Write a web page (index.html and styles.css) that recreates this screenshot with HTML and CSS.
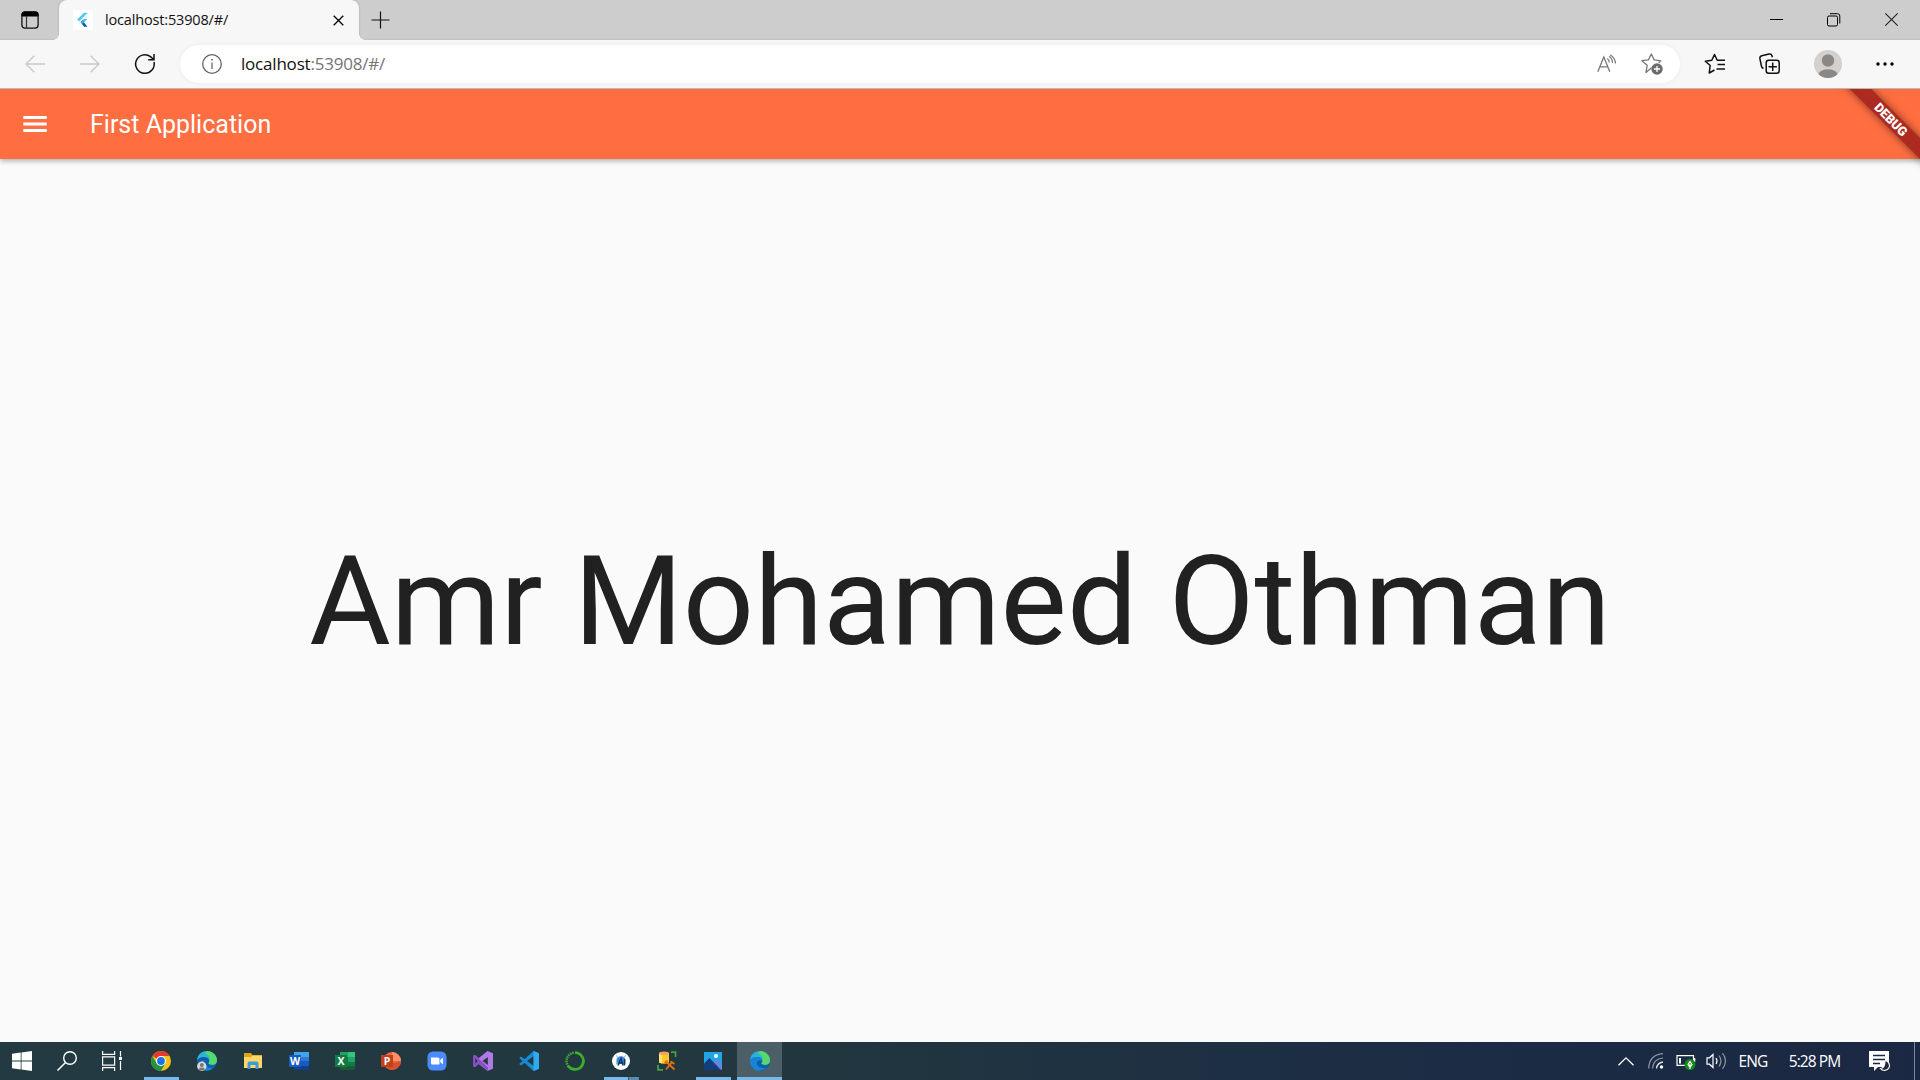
FILE: index.html
```html
<!DOCTYPE html>
<html lang="en">
<head>
<meta charset="utf-8">
<title>First Application</title>
<link rel="stylesheet" href="styles.css">
</head>
<body>
<div class="screen">
  <header class="tabstrip">
    <button class="workspace" aria-label="Tab actions"><svg width="18" height="18" viewBox="0 0 18 18"><rect x=".9" y=".9" width="16.2" height="16.2" rx="3" fill="none" stroke="#111" stroke-width="1.3"/><path d="M1 5V3.500Q1 1 3.500 1h11Q17 1 17 3.500V5z" fill="#000" stroke="#000"/><path d="M5.500 5v12" stroke="#333" stroke-width="1.200"/></svg></button>
    <div class="tab">
      <span class="favicon"><svg width="20" height="20" viewBox="0 0 20 20"><path d="M14.300 3H11L4.500 9.500 6.200 11.200z" fill="#54c5f8" stroke="#54c5f8" stroke-width=".5"/><path d="M14.300 9H11L7.700 12.200l1.700 1.700z" fill="#45b4f0"/><path d="M7.700 12.200l1.700-1.600 5 6.100H11.200z" fill="#01579b"/><path d="M7.700 12.200l1.700-1.700 1.700 1.700-1.700 1.700z" fill="#29b6f6"/></svg></span>
      <span class="tab-title">localhost:53908/#/</span>
      <button class="tab-close" aria-label="Close tab"><svg width="11" height="11" viewBox="0 0 11 11"><path d="M.7.700l9.600 9.600M10.300.700L.700 10.300" stroke="#000" stroke-width="1.300"/></svg></button>
    </div>
    <button class="new-tab" aria-label="New tab"><svg width="18" height="18" viewBox="0 0 18 18"><path d="M9.500 .5v17M.5 9h18" stroke="#111" stroke-width="1.200"/></svg></button>
    <div class="window-controls">
      <button aria-label="Minimize"><svg width="13" height="13" viewBox="0 0 13 13"><path d="M0 6.500h13" stroke="#000"/></svg></button>
      <button aria-label="Restore"><svg width="14" height="14" viewBox="0 0 14 14"><rect x=".5" y="3" width="10" height="10" rx="1.500" fill="none" stroke="#000"/><path d="M3 .7h7.500q2.300 0 2.300 2.300v7.500" fill="none" stroke="#000"/></svg></button>
      <button aria-label="Close"><svg width="13" height="13" viewBox="0 0 13 13"><path d="M.3.300l12.400 12.400M12.700.300L.300 12.700" stroke="#222" stroke-width="1.100"/></svg></button>
    </div>
  </header>

  <nav class="toolbar">
    <div class="nav-buttons">
      <button aria-label="Back"><svg width="20" height="18" viewBox="0 0 20 18"><path d="M20 9H1M9.300.700L1 9l8.300 8.300" fill="none" stroke="#c8c8c8" stroke-width="1.300"/></svg></button>
      <button aria-label="Forward"><svg width="20" height="18" viewBox="0 0 20 18"><path d="M0 9h19M10.700.700L19 9l-8.300 8.300" fill="none" stroke="#c8c8c8" stroke-width="1.300"/></svg></button>
      <button aria-label="Refresh"><svg width="22" height="22" viewBox="0 0 22 22"><path d="M20 9A9.300 9.300 0 1 1 16.500 3.600L19.700 6.500M20 1v5.700h-5.800" fill="none" stroke="#111" stroke-width="1.500"/></svg></button>
    </div>
    <div class="address">
      <svg width="20" height="20" viewBox="0 0 20 20"><circle cx="10" cy="10" r="9.300" fill="none" stroke="#666" stroke-width="1.300"/><path d="M10 8.500V15" stroke="#666" stroke-width="1.300"/><circle cx="10" cy="5.700" r=".9" fill="#666"/></svg>
      <span class="url"><b>localhost</b>:53908/#/</span>
      <span class="address-actions">
        <svg width="20" height="20" viewBox="0 0 20 20"><path d="M.8 17.800L6.800 3l6 14.800M2.900 12.800h7.900" fill="none" stroke="#777" stroke-width="1.300"/><path d="M10.300 4.500q2 1.600 2 4M12.200 2.300q3.300 2.500 3.300 6.800M13.300.700q5 3.300 5.200 8.900" fill="none" stroke="#777" stroke-width="1.200"/></svg>
        <svg width="22" height="22" viewBox="0 0 22 22"><path d="M10.500 14.800L5 19.500 6.200 12.200.900 7.700l6.500-.8L10.300 1l2.900 5.900 6.500.900-2 2" fill="none" stroke="#777" stroke-width="1.300" stroke-linejoin="round"/><circle cx="16" cy="16" r="5.700" fill="#6b6b6b"/><path d="M16 13v6M13 16h6" stroke="#fff" stroke-width="1.300"/></svg>
      </span>
    </div>
    <div class="browser-actions">
      <button aria-label="Favorites"><svg width="22" height="22" viewBox="0 0 22 22"><path d="M10.500 17L5.200 20l1-7.500L1.300 8.200l6.500-.9L10.500 1.500l2.700 5.700 7.800.100" fill="none" stroke="#111" stroke-width="1.500" stroke-linejoin="round"/><path d="M13.500 11.500H21M12.500 16H21" stroke="#111" stroke-width="1.500"/></svg></button>
      <button class="collections" aria-label="Collections"><svg width="22" height="22" viewBox="0 0 22 22"><rect x="7.200" y="7.200" width="13" height="13" rx="2.500" fill="none" stroke="#111" stroke-width="1.500"/><path d="M13.700 9.500v8.400M9.500 13.700h8.400" stroke="#111" stroke-width="1.500"/><path d="M4.500 15.500Q2.900 15 2.400 13L.900 5.700Q.600 3.400 2.800 2.800L10 1.100q2.400-.400 3 1.700l.400 1.500" fill="none" stroke="#111" stroke-width="1.500"/></svg></button>
      <button aria-label="Profile"><svg width="28" height="28" viewBox="0 0 28 28"><circle cx="14" cy="14" r="14" fill="#d3d1ce"/><circle cx="14" cy="10.500" r="6.200" fill="#8b8784"/><path d="M4.300 24a10.500 7.500 0 0 1 19.400 0A14 14 0 0 1 4.300 24" fill="#8b8784"/></svg></button>
      <button aria-label="Settings"><svg width="18" height="4" viewBox="0 0 18 4"><circle cx="2" cy="2" r="1.700"/><circle cx="9" cy="2" r="1.700"/><circle cx="16" cy="2" r="1.700"/></svg></button>
    </div>
  </nav>

  <main class="app">
    <div class="appbar">
      <svg class="menu" width="24" height="16" viewBox="0 0 24 16"><path d="M.3 1.500h23.400M.3 8h23.400M.3 14.500h23.400" stroke="#fff" stroke-width="2.800"/></svg>
      <h1>First Application</h1>
    </div>
    <div class="content">Amr Mohamed Othman</div>
    <div class="debug">DEBUG</div>
  </main>

  <footer class="taskbar">
    <div class="system">
      <span><svg width="20" height="20" viewBox="0 0 20 20"><path d="M0 2.800L8.700 1.500v8H0zM9.500 1.400L20 0v9.500H9.500zM0 10.500h8.700v8L0 17.300zM9.500 10.500H20V20L9.500 18.600z" fill="#fff"/></svg></span>
      <span><svg width="20" height="20" viewBox="0 0 20 20"><circle cx="13" cy="7" r="6.300" fill="none" stroke="#fff" stroke-width="1.400"/><path d="M8.500 11.500L.500 19.500" stroke="#fff" stroke-width="1.600"/></svg></span>
      <span><svg width="20" height="20" viewBox="0 0 20 20"><path d="M.6 0v3.400h12V0M.6 20v-3.400h12V20M.6 5.800h12v8.400H.6zM18.500 0v5.500M18.500 10v9" fill="none" stroke="#fff" stroke-width="1.200"/><path d="M17 6h3v3h-3z" fill="#fff"/></svg></span>
    </div>
    <div class="apps">
      <span class="running"><svg width="20" height="20" viewBox="0 0 20 20"><circle cx="10" cy="10" r="10" fill="#fbc116"/><path d="M10 10L1.340 5A10 10 0 0 1 18.660 5H10z" fill="#e33b2e"/><path d="M1.340 5A10 10 0 0 0 10 20l4.300-7.500H5.700z" fill="#229342"/><circle cx="10" cy="10" r="5" fill="#fff"/><circle cx="10" cy="10" r="3.900" fill="#1a73e8"/></svg></span>
      <span><svg width="20" height="20" viewBox="0 0 20 20"><circle cx="10" cy="10" r="10" fill="#0d5fad"/><path d="M0 10C0 4 4.500 0 10 0s10 4.500 10 9.200c0 3-2.300 4.600-5 4.600-2.200 0-3.500-.800-3.500-1.500 0-.500.800-.800.800-2.300C12.300 7.300 9.500 6 7 6 3.500 6 0 8 0 10" fill="#2bb5d5"/><path d="M10 0c5.500 0 10 4.500 10 9.200 0 3-2.300 4.600-5 4.600-2.200 0-3.500-.800-3.500-1.500 2.500-4 1-8.300-3.500-10z" fill="#54d96a"/><path d="M7 9c-1 5 4 9 9 7.500-2 3-7 4.500-11 2.300C1 14.500 3 9.500 7 9" fill="#1785d5"/><circle cx="4.800" cy="15.300" r="4.700" fill="#d8d8d8"/><circle cx="4.800" cy="14" r="2" fill="#777"/><path d="M1.600 18a3.500 2.500 0 0 1 6.400 0 4 4 0 0 1-6.400 0" fill="#777"/></svg></span>
      <span><svg width="18" height="18" viewBox="0 0 18 18"><path d="M0 3V1h7l1.500 2H18v4H0z" fill="#e3a21a"/><path d="M0 5h7l1.500-1.200H18V16H0z" fill="#ffd766"/><path d="M3.500 17v-5.500q0-2 2-2h7q2 0 2 2V17h-3v-4h-5v4z" fill="#3c9be0"/></svg></span>
      <span><svg width="20" height="20" viewBox="0 0 20 20"><path d="M5 1h15v18H5z" fill="#2b7cd3"/><path d="M5 1h15v5H5z" fill="#41a5ee"/><path d="M5 10h15v5H5z" fill="#185abd"/><path d="M5 15h15v4H5z" fill="#103f91"/><path d="M0 4h12v12H0z" fill="#185abd"/><text x="6" y="13.700" class="glyph">W</text></svg></span>
      <span><svg width="20" height="20" viewBox="0 0 20 20"><path d="M5 1h15v18H5z" fill="#107c41"/><path d="M5 1h8v5H5z" fill="#21a366"/><path d="M13 1h7v5h-7z" fill="#33c481"/><path d="M13 6h7v5h-7z" fill="#21a366"/><path d="M5 15h15v4H5z" fill="#185c37"/><path d="M0 4h12v12H0z" fill="#107c41"/><text x="6" y="13.700" class="glyph">X</text></svg></span>
      <span><svg width="20" height="20" viewBox="0 0 20 20"><circle cx="11" cy="10" r="9" fill="#ed6c47"/><path d="M11 1a9 9 0 0 1 9 9h-9z" fill="#ff8f6b"/><path d="M20 10a9 9 0 0 1-17 4z" fill="#d35230"/><path d="M0 4h12v12H0z" fill="#c43e1c"/><text x="6" y="13.700" class="glyph">P</text></svg></span>
      <span><svg width="20" height="20" viewBox="0 0 20 20"><rect x=".5" y=".5" width="19" height="19" rx="5.500" fill="#4a8cff"/><path d="M4 6.500h7q1.500 0 1.500 1.500v5.500h-7Q4 13.500 4 12zM13.300 8.800L16 6.800v6.400l-2.700-1.900z" fill="#fff"/></svg></span>
      <span><svg width="20" height="20" viewBox="0 0 20 20"><path d="M0 5l2-1 3.500 3.200L14.500 0 20 2.300v15.400L14.500 20 5.500 12.800 2 16l-2-1z" fill="#b179e8"/><path d="M0 5l2-1 13 12.500V20L2.500 9.800V12L5 10l1 3-4 3-2-1z" fill="#864fc3"/><path d="M2.300 7.300L4.500 10l-2.200 2.700zM14.800 6v8L9.500 10z" fill="#22383f"/></svg></span>
      <span><svg width="20" height="20" viewBox="0 0 20 20"><path d="M14.500 0L20 2.300v15.400L14.500 20 .2 7 2 5.500 14.800 15V5L2 14.500.2 13z" fill="#168bd3"/><path d="M14.500 0L20 2.300v15.400L14.500 20z" fill="#32a9ef"/></svg></span>
      <span><svg width="20" height="20" viewBox="0 0 20 20"><path d="M10 1.600A8.400 8.400 0 1 1 3.200 15" fill="none" stroke="#3cae2b" stroke-width="2.800"/><path d="M3.500 15.500A8.400 8.400 0 0 1 9.500 1.700" fill="none" stroke="#3cae2b" stroke-width="2.500" stroke-dasharray="1.500 .8"/></svg></span>
      <span class="running grouped"><svg width="18" height="18" viewBox="0 0 18 18"><circle cx="9" cy="9" r="9" fill="#fff"/><path d="M4.500 12V8a4.500 3.800 0 0 1 9 0v4z" fill="#4285e8"/><path d="M5.500 5L4.500 3.500M12.500 5l1-1.500" stroke="#3ddc84"/><path d="M6 13.500l3-7 2 7M7 11h3.500M12.500 7v6.500" fill="none" stroke="#173b5c" stroke-width="1.500"/><path d="M4 12l2-2v3z" fill="#3ddc84"/></svg></span>
      <span><svg width="20" height="20" viewBox="0 0 20 20"><path d="M2 2v9.500q5 2.500 10 0V2z" fill="#fcc927"/><path d="M2 2v9.500l3 1V2z" fill="#ffe37a"/><ellipse cx="7" cy="2.200" rx="5" ry="1.800" fill="#f4a261"/><path d="M14 1.200h4.500V6M1 14v4.800h5" fill="none" stroke="#43a047" stroke-width="1.800"/><path d="M9 18.500l6.500-8M9 10.500l8.500 8M7.500 12l3-2.500M13.500 10.500l4 2.500" stroke="#e8710a" stroke-width="1.800"/></svg></span>
      <span class="running"><svg width="18" height="18" viewBox="0 0 18 18"><path d="M0 0h18v18H0z" fill="#22a5e8"/><path d="M9 11l4-3.500 5 4.500v6H9z" fill="#6a84dc"/><path d="M0 11.500L5.500 6 17 18H0z" fill="#133d7d"/><circle cx="12" cy="4" r="2" fill="#fff"/></svg></span>
      <span class="running active"><svg width="20" height="20" viewBox="0 0 20 20"><circle cx="10" cy="10" r="10" fill="#0d5fad"/><path d="M0 10C0 4 4.500 0 10 0s10 4.500 10 9.200c0 3-2.300 4.600-5 4.600-2.200 0-3.500-.800-3.500-1.500 0-.500.800-.800.800-2.300C12.300 7.300 9.500 6 7 6 3.500 6 0 8 0 10" fill="#2bb5d5"/><path d="M10 0c5.500 0 10 4.500 10 9.200 0 3-2.300 4.600-5 4.600-2.200 0-3.500-.800-3.500-1.500 2.500-4 1-8.300-3.500-10z" fill="#54d96a"/><path d="M0 10c0-2 3-4.500 7-4 3 .500 5 2 5.300 4-3-2-6 0-5.300 3 .7 3.500 5 5 9 3.500-1.500 2.500-7 4.500-11 2.300Q0 15.500 0 10" fill="#1785d5"/></svg></span>
    </div>
    <div class="tray">
      <span class="t-icon"><svg width="16" height="9" viewBox="0 0 16 9"><path d="M.5 8.300L8 .9l7.500 7.400" fill="none" stroke="#fff" stroke-width="1.300"/></svg></span>
      <span class="t-icon"><svg width="16" height="16" viewBox="0 0 16 16"><g fill="none" stroke="#8c96a5" stroke-width="1.200"><path d="M.7 15.500Q1 2 15 .7"/><path d="M4.500 15.500Q5 6 15 5"/></g><path d="M8.500 15.500Q9 10 15 9" fill="none" stroke="#ddd" stroke-width="1.300"/><circle cx="13.500" cy="14" r="1.700" fill="#fff"/></svg></span>
      <span class="t-icon"><svg width="20" height="16" viewBox="0 0 20 16"><path d="M1 2.600h16.500v9.800H1z" fill="none" stroke="#fff" stroke-width="1.200"/><path d="M3 5h2v5.500H3zM18 5h1.300v4H18z" fill="#fff"/><circle cx="14" cy="11.500" r="5.500" fill="#13891c"/><path d="M14 8.500l2 3-2 3-2-3zM14 11v5" fill="none" stroke="#fff" stroke-width="1.200"/></svg></span>
      <span class="t-icon"><svg width="21" height="18" viewBox="0 0 21 18"><path d="M1 5.800h2.500L7 2.500v13l-3.500-3.300H1z" fill="none" stroke="#fff" stroke-width="1.200"/><path d="M10 6q2 3 0 6" fill="none" stroke="#fff" stroke-width="1.200"/><path d="M13 3.500q4 5.500 0 11M16.500 1.200q6 7.800 0 15.600" fill="none" stroke="#8c96a5" stroke-width="1.200"/></svg></span>
      <span class="lang">ENG</span>
      <span class="clock">5:28 PM</span>
      <span class="notif"><svg width="21" height="20" viewBox="0 0 21 20"><path d="M0 0h20v16H9l-4 4v-4H0z" fill="#fff"/><path d="M4 4.500h12M4 8.500h12M4 12.500h7" stroke="#1b2944" stroke-width="1.300"/><path d="M16 9.500a5 5 0 1 1-4.500 8q4.500 0 4.500-8" fill="#1b2944" stroke="#fff" stroke-width="1.200"/></svg></span>
      <span class="show-desktop"></span>
    </div>
  </footer>
</div>
</body>
</html>
```
FILE: styles.css
```css
* { box-sizing: border-box; }
body { margin: 0; overflow: hidden; font-family: "Open Sans", "Noto Sans", sans-serif; }
button { border: 0; padding: 0; background: none; display: flex; align-items: center; justify-content: center; }
svg { display: block; flex: none; overflow: visible; }

.screen { width: 1920px; height: 1080px; display: grid; grid-template-rows: 40px 49px 953px 38px; }

/* Browser tab strip */
.tabstrip { display: flex; background: linear-gradient(#cdcdcd 38px, #c0c0c0 40px); }
.workspace { width: 59px; height: 40px; padding-left: 1px; }
.tab { position: relative; width: 300px; height: 40px; padding: 0 15px 0 14px; display: flex; align-items: center; background: #f7f7f7; border-radius: 8px 8px 0 0; box-shadow: 0 0 2px rgba(0, 0, 0, .25); clip-path: inset(-2px -8px 0 -8px); }
.tab::before, .tab::after { content: ""; position: absolute; bottom: 0; width: 6px; height: 6px; }
.tab::before { left: -6px; background: radial-gradient(circle at 0 0, transparent 5.500px, #f7f7f7 6px); }
.tab::after { right: -6px; background: radial-gradient(circle at 100% 0, transparent 5.500px, #f7f7f7 6px); }
.favicon { width: 20px; height: 20px; background: #fff; }
.tab-title { flex: 1; margin-left: 12px; font-size: 14.500px; letter-spacing: -.16px; line-height: 20px; color: #111; }
.tab-close { width: 12px; height: 12px; }
.new-tab { width: 42px; height: 39px; }
.window-controls { margin-left: auto; display: flex; }
.window-controls button { width: 57.500px; height: 39px; }

/* Navigation toolbar */
.toolbar { display: flex; align-items: center; background: #f7f7f7; border-bottom: 1px solid #b9b9b9; }
.nav-buttons { width: 180px; padding-left: 7px; display: flex; }
.nav-buttons button { width: 55px; height: 46px; }
.address { width: 1500px; height: 38px; padding: 0 17px 0 22px; display: flex; align-items: center; background: #fff; border-radius: 19px; box-shadow: 0 0 5px rgba(0, 0, 0, .06); }
.url { margin-left: 19px; padding-bottom: 2px; font-size: 17px; letter-spacing: -.2px; color: #757575; }
.url b { font-weight: 400; color: #111; }
.address-actions { margin-left: auto; display: flex; align-items: center; gap: 24px; }
.browser-actions { flex: 1; display: flex; padding-left: 7px; }
.browser-actions button { width: 56.500px; height: 40px; }
.browser-actions .collections { padding-right: 3px; }

/* Page */
.app { position: relative; overflow: hidden; display: flex; flex-direction: column; background: #fafafa; font-family: Roboto, sans-serif; }
.appbar { z-index: 1; height: 70px; padding-left: 23px; display: flex; align-items: center; background: #ff6e40; color: #fff; box-shadow: 0 2px 5px rgba(0, 0, 0, .3); }
.appbar h1 { margin: 0 0 0 43px; font-size: 25px; font-weight: 400; }
.content { flex: 1; padding-top: 2px; display: flex; align-items: center; justify-content: center; font-size: 125px; line-height: 146px; color: #212121; white-space: nowrap; }
.debug { position: absolute; z-index: 2; top: 22.500px; right: -30.500px; width: 120px; height: 15px; transform: rotate(45deg); background: #ad2a21; box-shadow: 0 0 8px rgba(0, 0, 0, .5); color: #fff; font-size: 12.750px; font-weight: 900; line-height: 15px; text-align: center; }

/* Windows taskbar */
.taskbar { display: flex; background: linear-gradient(90deg, #233a42 0%, #22373f 40%, #1b2c44 75%, #1b2843 100%); color: #fff; }
.system, .apps, .tray { display: flex; }
.system span { width: 45px; padding-right: 1px; display: flex; align-items: center; justify-content: center; }
.apps { margin-left: 3px; gap: 1px; }
.apps span { position: relative; width: 45px; display: flex; align-items: center; justify-content: center; }
.running::after { content: ""; position: absolute; left: 6px; bottom: 0; width: 35px; height: 3px; background: #76b9ed; }
.grouped::after { background: linear-gradient(90deg, #76b9ed 24px, #3d5f75 24px 25px, #5a8bb0 25px); }
.apps .active { margin-left: 1px; background: #4d5f66; }
.active::after { left: 0; width: 45px; }
.glyph { fill: #fff; font: 700 10.500px "Open Sans", sans-serif; text-anchor: middle; }
.tray { margin-left: auto; align-items: center; font-size: 15.500px; }
.t-icon { width: 30px; height: 38px; display: flex; align-items: center; justify-content: center; }
.lang { width: 46px; padding-right: 2px; text-align: center; letter-spacing: -.8px; }
.clock { width: 76px; padding-right: 1px; text-align: center; letter-spacing: -.9px; }
.notif { width: 52px; display: flex; justify-content: center; }
.show-desktop { width: 6px; height: 38px; margin-left: 9px; border-left: 1px solid #7f8897; }
```
